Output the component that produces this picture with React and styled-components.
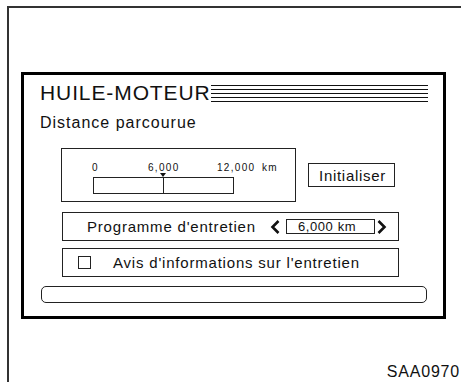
import styled, { createGlobalStyle } from 'styled-components'

const GlobalStyle = createGlobalStyle`
  html {
    overflow: hidden;
  }
  body {
    margin: 0;
    padding: 0;
    background: #fff;
    font-family: "Liberation Sans", Arial, sans-serif;
    color: #111;
  }
`

const Frame = styled.div`
  margin: 6px 0 0 7px;
  box-sizing: border-box;
  border-top: 2px solid #333;
  border-left: 2px solid #333;
  padding: 64px 0 0 12px;
`

const Panel = styled.section`
  width: 425px;
  height: 247px;
  box-sizing: border-box;
  border: 3px solid #000;
  padding: 6px 15px 0 16px;
  display: flex;
  flex-direction: column;
`

const TitleRow = styled.div`
  display: flex;
  align-items: flex-start;
  height: 24px;
`

const Title = styled.h1`
  margin: 0;
  font-size: 21px;
  font-weight: 400;
  line-height: 24px;
  letter-spacing: 0.9px;
`

const Rules = styled.div`
  flex: 1;
  height: 17px;
  margin: 4px 0 0 0;
  background: repeating-linear-gradient(to bottom, #111 0 1px, transparent 1px 4px);
`

const Subtitle = styled.div`
  margin-top: 8px;
  font-size: 16px;
  line-height: 20px;
  letter-spacing: 1px;
`

const DistanceRow = styled.div`
  margin: 15px 0 0 21px;
  display: flex;
  align-items: center;
  gap: 12px;
`

const GaugeBox = styled.div`
  width: 235px;
  height: 54px;
  box-sizing: border-box;
  border: 1px solid #222;
  padding: 11px 0 0 26px;
`

const Button = styled.button`
  width: 87px;
  height: 24px;
  box-sizing: border-box;
  border: 1px solid #222;
  background: #fff;
  padding: 0 0 0 2px;
  font-family: inherit;
  font-size: 15px;
  letter-spacing: 0.7px;
  color: #111;
`

const OptionRow = styled.div`
  margin: ${p => p.$gap}px 0 0 22px;
  width: 337px;
  height: 29px;
  box-sizing: border-box;
  border: 1px solid #222;
  display: flex;
  align-items: center;
  padding-left: ${p => p.$indent}px;
  font-size: 15px;
  letter-spacing: 0.8px;
`

const Label = styled.span`
  margin-right: ${p => p.$after || 0}px;
`

const Chevron = styled.svg`
  flex: none;
  display: block;
`

const ValueBox = styled.div`
  width: 89px;
  height: 15px;
  box-sizing: border-box;
  border: 1px solid #222;
  margin: 0 1px 0 5px;
  padding-left: 11px;
  font-size: 13px;
  line-height: 13px;
  letter-spacing: 0.6px;
`

const Checkbox = styled.span`
  width: 13px;
  height: 13px;
  box-sizing: border-box;
  border: 1.5px solid #222;
  margin-right: 22px;
  flex: none;
`

const StatusBar = styled.div`
  margin: 9px 0 0 1px;
  width: 386px;
  height: 17px;
  box-sizing: border-box;
  border: 1.5px solid #222;
  border-radius: 5px;
`

const Caption = styled.div`
  margin-top: 45px;
  padding: 0 1px 2px 0;
  text-align: right;
  font-size: 16px;
  line-height: 16px;
  letter-spacing: 0.8px;
  white-space: nowrap;
`

function Gauge() {
  const text = { fontSize: 10, letterSpacing: 1.3, fill: '#111' }
  return (
    <svg width="192" height="36" viewBox="0 0 192 36" style={{ display: 'block' }}>
      <g fontFamily="Liberation Sans, Arial, sans-serif" {...text}>
        <text x="4" y="11">0</text>
        <text x="60" y="11">6,000</text>
        <text x="129" y="11">12,000</text>
        <text x="174" y="11">km</text>
      </g>
      <polygon points="72,13 78,13 75,17" fill="#111" />
      <rect x="5.5" y="17.5" width="140" height="16" fill="none" stroke="#222" />
      <line x1="75.5" y1="17" x2="75.5" y2="34" stroke="#222" />
    </svg>
  )
}

function Arrow({ dir }) {
  const d = dir === 'left' ? 'M8.5 2 L2.5 8 L8.5 14' : 'M2.5 2 L8.5 8 L2.5 14'
  return (
    <Chevron width="11" height="16" viewBox="0 0 11 16">
      <path d={d} fill="none" stroke="#111" strokeWidth="2.6" />
    </Chevron>
  )
}

export default function App() {
  return (
    <>
      <GlobalStyle />
      <Frame>
        <Panel>
          <TitleRow>
            <Title>HUILE-MOTEUR</Title>
            <Rules />
          </TitleRow>
          <Subtitle>Distance parcourue</Subtitle>
          <DistanceRow>
            <GaugeBox>
              <Gauge />
            </GaugeBox>
            <Button>Initialiser</Button>
          </DistanceRow>
          <OptionRow $gap={10} $indent={24}>
            <Label $after={14}>Programme d'entretien</Label>
            <Arrow dir="left" />
            <ValueBox>6,000 km</ValueBox>
            <Arrow dir="right" />
          </OptionRow>
          <OptionRow $gap={7} $indent={15}>
            <Checkbox />
            <Label>Avis d'informations sur l'entretien</Label>
          </OptionRow>
          <StatusBar />
        </Panel>
        <Caption>SAA0970</Caption>
      </Frame>
    </>
  )
}
